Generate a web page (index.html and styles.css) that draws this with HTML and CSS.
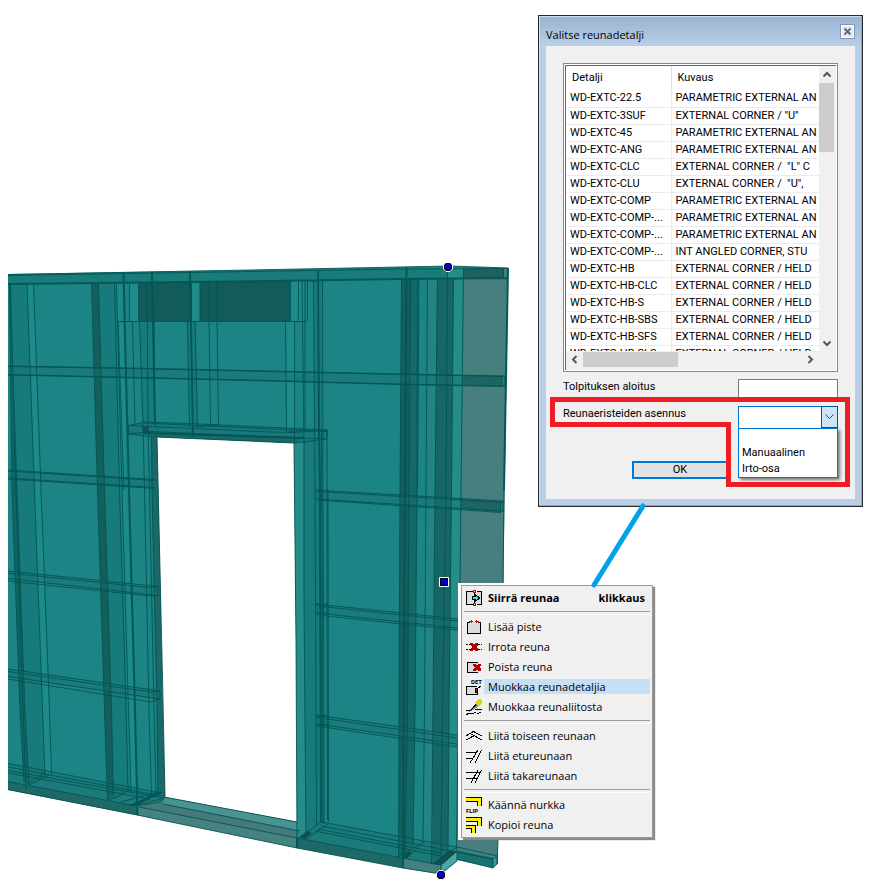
FILE: index.html
```html
<!DOCTYPE html>
<html lang="fi">
<head>
<meta charset="utf-8">
<title>Valitse reunadetalji</title>
<link rel="stylesheet" href="styles.css">
</head>
<body>
<main class="stage">
  <svg class="scene" width="872" height="896" viewBox="0 0 872 896" aria-hidden="true">
    <!-- wall panel with door opening -->
    <path fill="#1c8484" fill-rule="evenodd" d="M8 274L250 270L400 267L450 266L508 268L504 490L503 600L497 864L493 868L457 860L441 874L403 868L137 815L8 790ZM157 437L160 570L162 690L165 797L297 822L296 640L294 443Z"/>
    <!-- right return -->
    <path fill="#467f7d" d="M463.500 268L508 268L503.500 580L497.500 864L457 852L460 590Z"/>
    <!-- sill across the door -->
    <path fill="#4a9391" d="M164 797L297 822L305 832L163 804Z"/>
    <path fill="#45797a" d="M145 800L163 804L300 831L297 838L139 807Z"/>
    <path fill="#468280" d="M138 806L297 838L297 848L138 815Z"/>
    <!-- studs -->
    <g class="shade">
      <path d="M10 284L27 284L34.500 490L42.500 710L45 776L29 786L17 490Z"/>
      <path d="M98.500 284L116 284L120 490L127 710L129 792L113.500 799L111.500 710L104.500 490Z"/>
      <path d="M140 321H154L155 424L142 426Z"/>
      <path d="M313 281H322V430L323 710V824L317 826L315 490Z"/>
      <path d="M304 441L315 439V600L317 826L306 838L304 600Z"/>
      <path d="M187 321H196L198 430H190Z"/>
    </g>
    <path fill="#248483" d="M427 279H437.500L435 490L433 710L432 850L423 842L426 490Z"/>
    <path fill="#1c8b8a" d="M116.500 284H122L127 490L134 710L137 796L131 790L122 490Z"/>
    <path fill="#1c8b8a" d="M27 284H33.500L41 490L49.500 710L52 774L45 776L42.500 710L34.500 490Z"/>
    <path fill="#268c88" d="M453.500 268H463.500L461 490L460 590L457 851L448 851L449 710L451.500 490Z"/>
    <path fill="#268c88" d="M294 443L304 441L304 600L306 835L298 839L296 640Z"/>
    <path fill="#1c8b8a" d="M286 321H294L295 433H287Z"/>
    <path fill="#155e5e" d="M91.500 284H98.500L104.500 490L111.500 710L113.500 796L107.500 800L104.500 710L97.500 490Z"/>
    <path fill="#126462" d="M9 284L11 375L12 490L20 710L24 782L29 784L25 710L17 490L13 375L10 284Z"/>
    <path fill="#1c6868" d="M151.500 437H157L158 480L163 710L165 798L158 796L157 710L152 490Z"/>
    <path fill="#146868" d="M401.500 279H417.500L417 490L415 710L413 846L399 857V710L400 490Z"/>
    <path fill="#155e5e" d="M401.500 279H410.500L409 490L408 710L405 852L399 857V710L400 490Z"/>
    <path fill="#166667" d="M437 279H453.500L451.500 490L449 710L448 853L432 864L433 710L435 490Z"/>
    <!-- lintel -->
    <path fill="#135a5a" d="M139 283L290 281V321H139Z"/>
    <path fill="#1c8b8a" d="M130 283H138V321H130ZM192 283H200V321H192ZM291 281H304V321H291Z"/>
    <!-- top plate and rails -->
    <path fill="#1a7b7b" d="M8 275L250 271L400 268.500L463 268V279L400 279L250 281L8 284Z"/>
    <path fill="#268c88" d="M447 268H463.500V278H447Z"/>
    <path fill="#1f6060" d="M463.500 268.500H504V278H463Z"/>
    <g class="rail">
      <path d="M8 366L270 371L505 376V386L270 380.500L8 374.500Z"/>
      <path d="M8 470L155 479.500V488L8 478.500Z"/>
      <path d="M8 571L158 587V596L8 579Z"/>
      <path d="M8 669L161 691V700L8 677Z"/>
      <path d="M315 490L503 501V512L315 499Z"/>
      <path d="M316 604L458 619V629L316 613Z"/>
      <path d="M316 715L457 735V746L316 724Z"/>
      <path d="M8 764L161 793L163 800L134 804L8 781Z"/>
      <path d="M321 822L457 847L440 864L403 858L300 838Z"/>
    </g>
    <path fill="#1f6464" d="M462.500 375L502 376V386L462.500 384.500ZM461 499L500 501.500V512L461 509Z"/>
    <!-- door header -->
    <path fill="#19787a" d="M128.500 425.500L144 422L327 430V439L294 443L157 437L128.500 434Z"/>
    <path fill="#1c6868" d="M144 433L304 437.500L294 443L157 437Z"/>
    <path fill="#155050" d="M143 427H148V433H143Z"/>
    <!-- bottom plates -->
    <path fill="#1f6868" d="M8 781.500L137 806V815L8 789.500ZM297 838L403 858V868L297 848Z"/>
    <path fill="#467f7d" d="M403 858L441 865V874L403 868Z"/>
    <path fill="#4ba5a3" d="M441 865L457 851V861L441 874Z"/>
    <path fill="#10504f" d="M433 864L449 851H457L441 865ZM130 805L158 792H163L138 805ZM299 837L307 831L312 833L305 839ZM401 857L408 851L412 852L407 859Z"/>
    <path fill="#1b7070" d="M457 850L493 858V867L457 859Z"/>
    <path fill="#389a98" d="M493 858L497.500 855.500V864L493 868Z"/>

    <g class="edge">
      <!-- outline -->
      <path d="M8 274.500L250 270L400 267L450 266L508 268M508 268L504 490L503 585M498 840L497 864L493 868L457 859"/>
      <path d="M8 275.500L250 271.500L400 269L508 268.500M8 789.500L137 815L297 848L403 868L441 874L457 861"/>
      <path d="M157 437L160 570L163 700L165 797M294 443L296 640L297 848M164 797L297 822M163 804L300 831M139 807L297 838M8 781.500L137 806M297 838L403 858L441 865L457 851V861M441 865V874"/>
      <!-- left studs -->
      <path d="M9.500 284L12 490L20 710L24 783M10.500 284L13 375L17 490L25 710L29 785M14 430L23 710L26 790M27 284L34.500 490L42.500 710L45 776M33.500 284L41 490L49.500 710L51.500 774"/>
      <path d="M91.500 284L97.500 490L104.500 710L107.500 800M98.500 284L104.500 490L111.500 710L113.500 796M114.500 284L119.500 490L126 710L128 791M116.500 284L122 490L128.500 710L131 792M118 321L124 490"/>
      <path d="M129.500 284V321M138.500 284V321M132.500 321L135 425M139.500 321L143 425L144.500 490L149 710L151.500 795M147 284L148 425L149.500 490L154 710L156 793M154 321L155 425M151.500 437L152 490L157 710L158 795"/>
      <path d="M187.500 321L189.500 427M195 321L197.500 427M208.500 283L210.500 425M216.500 283L218.500 425M118 321.500H307M200 283V321M285.500 321L286.500 432M294.500 321V443M290.500 281V321M298.500 281V321M302 281L304 443L304 600L306 838M305 281V430M307.500 281V321"/>
      <path d="M313.500 281L315 490L316 710L316.500 826M322.500 281L323 490L324 710V824M327 430V490L327.500 820M321.500 430L323 822M328 490L328.500 822"/>
      <!-- right studs -->
      <path d="M401.500 279L400 490L399 710L398.500 857M410.500 279L409 490L407.500 710L405 852M417.500 279L417 490L415 710L413 846M419 279L417.500 490M427.500 279L426 490L424.500 710L423 843M437.500 279L435 490L433 710L431.500 864M447.500 268L446 490L442.500 710L441 858M453.500 279L451.500 490L449 710L448 852M463.500 268L461 490L460 590L456.500 850M503.500 268V278M502 376V386M500.500 501V512M497.500 855L497 864M493 858V868"/>
      <!-- rails -->
      <path d="M8 366L130 368L270 371L400 374L505 376M8 374.500L270 380.500L400 384L505 386M505 376V386"/>
      <path d="M8 366.500L130 368.500L270 371.500L400 374.500L505 376.500M8 375L270 381L400 384.500L505 386.500"/>
      <path d="M8 470L155 479.500M8 471L155 480.500M8 478L155 487.500M8 479L155 488.500"/>
      <path d="M8 571L158 586.500L149 587.500L8 573M8 578.500L158 595.500L150 596L8 581M158 586V596"/>
      <path d="M8 669L160 691L151 692L8 671.500M8 676.500L160 699L151 702L8 679M160 691V700"/>
      <path d="M315 490L503 501M317 491.500L503 502.500M315 499L503 511M317 500L501 512.500M503 501V512"/>
      <path d="M316 604L458 619M317 606L458 621M316 613L458 628M317 615L458 630M316 604L328 604L323 607M316 613L328 613"/>
      <path d="M316 715L457 735M317 717.500L457 738M316 724L457 744M317 726L457 747M317 717L327 715M317 726L327 724"/>
      <!-- door header -->
      <path d="M128.500 425.500L146 422L200 424L327 430V439M144 423L327 431.500M128.500 425.500L270 432L294 432.500L327 430M128.500 434L150 431.500L326 439M148 433L304 438M128.500 425.500V434L157 437L294 443L327 439M195 427L218 425M287 432L303 430"/>
      <!-- floor lines -->
      <path d="M8 763.500L161 793M8 767L161 796M8 770.500L163 798M8 773L150 799M29 785L51 774M26 784L45 773M113 799L129 790M121 802L158 792M130 806L161 793M138 805L165 798M107 800L117 797M165 797L160 802L137 806"/>
      <path d="M321 822L457 847L497.500 856L493 859L457 852M321 826L441 849M318 829L441 853M315 831L441 856M299 838L321 822M305 840L328 824M398 857L424 842M405 859L420 846M432 864L457 847M441 865L457 851M441 849L493 859"/>
    </g>
    <g class="edge heavy">
      <path d="M8 284L270 281L400 279L508 278M123.500 273L126 375L129 490L135 710L137.500 815M152 272L155 425M190 271L193 437M318 270L319 430L320 490L321 822M406.500 267L405 490L403.500 710L403 868M508 268L504 490M297 838V848M144 433L304 438"/>
    </g>
    <!-- point handles -->
    <g stroke="#fff" stroke-width="1">
      <path fill="#000" d="M446 262.500H450L452.500 265V269L450 271.500H446L443.500 269V265Z"/>
      <path fill="#000" d="M439 870.500H443L445.500 873V877L443 879.500H439L436.500 877V873Z"/>
      <path fill="#000" d="M439.500 577.500H448.500V586.500H439.500Z"/>
    </g>
    <path fill="#0000c8" d="M446 264H450L451 265V269L450 270H446L445 269V265ZM439 872H443L444 873V877L443 878H439L438 877V873ZM441 579H447V585H441Z"/>
  </svg>

  <section class="dialog" role="dialog" aria-labelledby="dialog-title">
    <header class="titlebar">
      <h1 id="dialog-title" class="title">Valitse reunadetalji</h1>
      <button class="close" type="button" aria-label="Sulje">
        <svg width="9" height="9" viewBox="0 0 9 9"><path d="M1.500 1.500L7.500 7.500M7.500 1.500L1.500 7.500" stroke="#5d6b7c" stroke-width="2"/></svg>
      </button>
    </header>
    <form class="content">
      <div class="listbox">
        <div class="viewport">
          <table class="details">
            <thead><tr><th class="code" scope="col">Detalji</th><th scope="col">Kuvaus</th></tr></thead>
            <tbody>
              <tr><td>WD-EXTC-22.5</td><td>PARAMETRIC EXTERNAL AN</td></tr>
              <tr><td>WD-EXTC-3SUF</td><td>EXTERNAL CORNER / "U"</td></tr>
              <tr><td>WD-EXTC-45</td><td>PARAMETRIC EXTERNAL AN</td></tr>
              <tr><td>WD-EXTC-ANG</td><td>PARAMETRIC EXTERNAL AN</td></tr>
              <tr><td>WD-EXTC-CLC</td><td>EXTERNAL CORNER /&nbsp; "L" C</td></tr>
              <tr><td>WD-EXTC-CLU</td><td>EXTERNAL CORNER /&nbsp; "U",</td></tr>
              <tr><td>WD-EXTC-COMP</td><td>PARAMETRIC EXTERNAL AN</td></tr>
              <tr><td>WD-EXTC-COMP-...</td><td>PARAMETRIC EXTERNAL AN</td></tr>
              <tr><td>WD-EXTC-COMP-...</td><td>PARAMETRIC EXTERNAL AN</td></tr>
              <tr><td>WD-EXTC-COMP-...</td><td>INT ANGLED CORNER, STU</td></tr>
              <tr><td>WD-EXTC-HB</td><td>EXTERNAL CORNER / HELD</td></tr>
              <tr><td>WD-EXTC-HB-CLC</td><td>EXTERNAL CORNER / HELD</td></tr>
              <tr><td>WD-EXTC-HB-S</td><td>EXTERNAL CORNER / HELD</td></tr>
              <tr><td>WD-EXTC-HB-SBS</td><td>EXTERNAL CORNER / HELD</td></tr>
              <tr><td>WD-EXTC-HB-SFS</td><td>EXTERNAL CORNER / HELD</td></tr>
              <tr><td>WD-EXTC-HB-SLS</td><td>EXTERNAL CORNER / HELD</td></tr>
            </tbody>
          </table>
        </div>
        <div class="vbar" aria-hidden="true">
          <svg class="arrow" width="16" height="17" viewBox="0 0 16 17"><path d="M4.500 10.500L8 7L11.500 10.500"/></svg>
          <div class="vthumb"></div>
          <svg class="arrow vend" width="16" height="17" viewBox="0 0 16 17"><path d="M4.500 7.500L8 11L11.500 7.500"/></svg>
        </div>
        <div class="hbar" aria-hidden="true">
          <svg class="arrow" width="17" height="15" viewBox="0 0 17 15"><path d="M10.500 4L7 7.500L10.500 11"/></svg>
          <div class="hthumb"></div>
          <svg class="arrow hend" width="17" height="15" viewBox="0 0 17 15"><path d="M6.500 4L10 7.500L6.500 11"/></svg>
        </div>
      </div>
      <div class="field">
        <label for="start">Tolpituksen aloitus</label>
        <input id="start" class="text" type="text">
      </div>
      <div class="field">
        <label for="insul">Reunaeristeiden asennus</label>
        <div class="combo">
          <select id="insul" class="select"><option></option><option>Manuaalinen</option><option>Irto-osa</option></select>
          <span class="drop" aria-hidden="true"><svg width="9" height="6" viewBox="0 0 9 6"><path d="M.5 .5L4.500 4.500L8.500 .5" fill="none" stroke="#444"/></svg></span>
          <ul class="options" role="listbox" aria-label="Reunaeristeiden asennus">
            <li role="option"></li><li role="option">Manuaalinen</li><li role="option">Irto-osa</li>
          </ul>
        </div>
      </div>
      <button class="ok" type="button">OK</button>
    </form>
  </section>

  <div class="popup">
    <ul class="menu" role="menu">
      <li><button class="item strong" role="menuitem"><svg class="icon" viewBox="0 0 16 16"><path fill="#ddd" stroke="#000" d="M6.500 1.500H.5V14.500H6.500M10.500 1.500H15.500V14.500H10.500"/><path fill="none" stroke="#000" d="M8.500 3V13"/><path fill="#fff" stroke="#c00000" d="M7.500 .5H9.500V2.500H7.500ZM7.500 13.500H9.500V15.500H7.500Z"/><path fill="#40e0e0" stroke="#000" d="M6.500 6.500H9.500V4.500L13.500 8L9.500 11.500V9.500H6.500Z"/></svg>Siirrä reunaa<span class="key">klikkaus</span></button></li>
      <li class="sep" role="separator"></li>
      <li><button class="item" role="menuitem"><svg class="icon" viewBox="0 0 16 16"><path fill="#ddd" d="M1 3H15V15H1Z"/><path fill="none" stroke="#000" d="M4 3.500H1.500V14.500H14.500V3.500H12"/><path fill="#f00000" d="M3 2H5V0L7 2.500L5 5V3H3ZM13 2H11V0L9 2.500L11 5V3H13Z"/></svg>Lisää piste</button></li>
      <li><button class="item" role="menuitem"><svg class="icon" viewBox="0 0 16 16"><path stroke="#000" fill="none" stroke-dasharray="2 1" d="M0 5.500H4M0 10.500H4M12 5.500H16M12 10.500H16"/><path fill="#b80000" d="M4 4H7L8 6L9 4H12V6L10 8L12 10V12H9L8 10L7 12H4V10L6 8L4 6Z"/></svg>Irrota reuna</button></li>
      <li><button class="item" role="menuitem"><svg class="icon" viewBox="0 0 16 16"><path fill="#ddd" stroke="#000" d="M12 3.500H1.500V13.500H12"/><path fill="#b80000" d="M7 5H10L11 7L12 5H15V7L13 8L15 10V12H12L11 10L10 12H7V10L9 8L7 7Z"/></svg>Poista reuna</button></li>
      <li><button class="item active" role="menuitem"><svg class="icon" viewBox="0 0 16 16"><path fill="#ddd" stroke="#000" d="M11 7.500H.5V15.500H11.500V12.500"/><path stroke="#000" d="M11 10L15.500 6.500"/><path fill="#e00000" stroke="#000" d="M9 9.500H11.500V13.500H9Z"/><text class="tiny" x="5" y="5">DET</text></svg><span class="label">Muokkaa reunadetaljia</span></button></li>
      <li><button class="item" role="menuitem"><svg class="icon" viewBox="0 0 16 16"><path fill="#888" d="M4 11L10 4L13 7L7 11L3 13Z"/><path fill="#e0d800" d="M9 4L12 0H14L16 1V4L13 7Z"/><path stroke="#000" fill="none" d="M3.500 12.500L10 5.500M0 11.500H4M0 15.500L3 14.500H7L10 13M9 10.500H16M11 14.500L15.500 13.500"/></svg>Muokkaa reunaliitosta</button></li>
      <li class="sep" role="separator"></li>
      <li><button class="item" role="menuitem"><svg class="icon" viewBox="0 0 16 16"><path stroke="#000" fill="none" d="M0 8L7.500 3.500L15.500 8M0 12L7.500 8M5 6L8 7.500L15.500 12"/></svg>Liitä toiseen reunaan</button></li>
      <li><button class="item" role="menuitem"><svg class="icon" viewBox="0 0 16 16"><path stroke="#000" fill="none" d="M0 4.500H10M0 10.500H6.500M4 15L12 2M9 15L15.500 2"/></svg>Liitä etureunaan</button></li>
      <li><button class="item" role="menuitem"><svg class="icon" viewBox="0 0 16 16"><path stroke="#000" fill="none" d="M0 4.500H14M0 10.500H12M5 15L12 2M9 15L15.500 2"/></svg>Liitä takareunaan</button></li>
      <li class="sep" role="separator"></li>
      <li><button class="item" role="menuitem"><svg class="icon" viewBox="0 0 16 16"><path fill="#ffef00" d="M0 1H15V9H12V4H0Z"/><path stroke="#000" fill="none" d="M0 .5H15.500V9M0 4.500H11.500V9"/><text class="tiny" x="0" y="16">FLIP</text></svg>Käännä nurkka</button></li>
      <li><button class="item" role="menuitem"><svg class="icon" viewBox="0 0 16 16"><path fill="#ffef00" d="M0 0H15V9H12V4H0ZM0 8H9V16H6V12H0Z"/><path stroke="#000" fill="none" d="M0 .5H15.500V9M0 4.500H11.500V9M0 8.500H9.500V16M0 11.500H5.500V16"/></svg>Kopioi reuna</button></li>
    </ul>
  </div>

  <!-- callout marks -->
  <svg class="marks" width="872" height="896" viewBox="0 0 872 896" aria-hidden="true">
    <path d="M552.500 399.500H847.500V484.500H728.500V424.500H552.500Z" fill="none" stroke="#ee1c24" stroke-width="5"/>
    <path d="M643 506L594 585" stroke="#00a2e8" stroke-width="5" stroke-linecap="round"/>
  </svg>
</main>
</body>
</html>
```
FILE: styles.css
```css
* { box-sizing: border-box; }

body {
  margin: 0;
  background: #fff;
  color: #000;
  font: 11px/16px Roboto, "Liberation Sans", Arial, sans-serif;
}

ul { list-style: none; margin: 0; padding: 0; }
button, input, select { font: inherit; color: inherit; border-radius: 0; }

.stage { position: relative; min-height: 100vh; }
.scene { display: block; }
.marks { position: absolute; left: 0; top: 0; pointer-events: none; }

.shade path { fill: #187b7b; }
.rail path { fill: #1a7070; fill-opacity: .45; }
.edge { fill: none; stroke: #005553; stroke-width: 1; stroke-opacity: .9; }
.heavy { stroke-width: 2; }

/* Dialog window */
.dialog {
  position: absolute;
  left: 538px;
  top: 15px;
  width: 325px;
  border: 1px solid #26282b;
  background: linear-gradient(#97b2d0, #b9cfe8 30px);
  box-shadow: inset -1px -1px #4cc5ee, inset 1px 1px #cfdff0;
  padding: 0 7px 7px;
}

.titlebar {
  display: flex;
  align-items: center;
  justify-content: space-between;
  height: 30px;
  padding-top: 7px;
}

.title {
  margin: 0;
  font: 11px/16px "Open Sans", "Noto Sans", sans-serif;
}

.close {
  display: flex;
  align-items: center;
  justify-content: center;
  width: 15px;
  height: 15px;
  padding: 0;
  margin-bottom: 6px;
  background: #e4ecf5;
  border: 1px solid #8295ad;
  box-shadow: inset 0 0 0 1px #fff;
}

.content {
  display: flex;
  flex-direction: column;
  background: #f0f0f0;
  padding: 17px 17px 20px;
}

/* Detail list */
.listbox {
  display: grid;
  grid-template-columns: 1fr 17px;
  grid-template-rows: 286px 19px;
  border: 1px solid #828790;
  padding: 1px;
  background: #f0f0f0;
  box-shadow: inset 0 0 0 1px #fff, inset 2px 2px #696969;
}

.viewport { overflow: hidden; background: #fff; margin: 1px 0 0 1px; }

.details { width: 400px; table-layout: fixed; border-collapse: collapse; }
.details th {
  height: 24px;
  padding: 0 6px;
  font-weight: 400;
  text-align: left;
  border-right: 1px solid #e0e0e0;
}
.details .code { width: 105px; }
.details td {
  height: 17px;
  padding: 0 4px;
  line-height: 16px;
  white-space: nowrap;
  border-right: 1px solid #ececec;
  border-bottom: 1px solid #ececec;
}

.vbar { display: flex; flex-direction: column; padding-top: 1px; }
.vthumb { width: 15px; height: 69px; background: #cdcdcd; }
.vend { margin-top: auto; }
.hbar { display: flex; padding-left: 1px; padding-top: 1px; }
.hthumb { width: 95px; height: 15px; background: #cdcdcd; }
.hend { margin-left: auto; }
.arrow { flex: none; fill: none; stroke: #555; stroke-width: 2; }

/* Form rows */
.field { display: flex; justify-content: space-between; height: 20px; margin-top: 7px; }
.text {
  width: 100px;
  height: 20px;
  padding: 0 4px;
  background: #fff;
  border: 1px solid #7a7a7a;
}
.combo { position: relative; width: 100px; }
.select {
  appearance: none;
  display: block;
  width: 100%;
  height: 23px;
  padding: 0 20px 0 4px;
  background: #fff;
  border: 1px solid #0078d7;
}
.drop {
  position: absolute;
  top: 0;
  right: 0;
  display: flex;
  align-items: center;
  justify-content: center;
  width: 17px;
  height: 22px;
  background: #cce4f7;
  border: 1px solid #005499;
  pointer-events: none;
}
.options {
  position: absolute;
  top: 22px;
  left: 0;
  width: 100%;
  background: #fff;
  border: 1px solid #0078d7;
  box-shadow: 2px 2px 3px #777;
}
.options li { height: 16px; padding-left: 3px; }

.ok {
  width: 96px;
  height: 18px;
  margin: 35px 0 0 69px;
  padding: 0;
  line-height: 14px;
  background: #e1e1e1;
  border: 2px solid #0078d7;
}

/* Context menu */
.popup {
  position: absolute;
  left: 458px;
  top: 583px;
  width: 197px;
  padding: 2px 2px 2px 3px;
  background: #fff;
}
.menu {
  padding: 2px;
  background: #f0f0f0;
  border: 1px solid #9a9a9a;
  box-shadow: 2px 2px 1px #8a8a8a;
  font: 11px/15px "Open Sans", "Noto Sans", sans-serif;
}
.item {
  display: flex;
  align-items: center;
  width: 100%;
  height: 20px;
  padding: 0 5px 2px 2px;
  border: 0;
  background: none;
  text-align: left;
  white-space: nowrap;
}
.icon { flex: none; width: 16px; height: 16px; margin: 2px 6px 0 0; overflow: visible; shape-rendering: crispEdges; }
.strong { font-weight: 700; }
.key { margin-left: auto; }
.active { padding-right: 0; }
.active .icon { margin-right: 2px; }
.label { flex: 1; padding-left: 4px; background: #c5dff5; }
.sep { height: 9px; padding-top: 3px; }
.sep::after { content: ""; display: block; height: 2px; border-top: 1px solid #a0a0a0; border-bottom: 1px solid #fff; }
.tiny { font: 700 6px Roboto, "Liberation Sans", sans-serif; }
```
